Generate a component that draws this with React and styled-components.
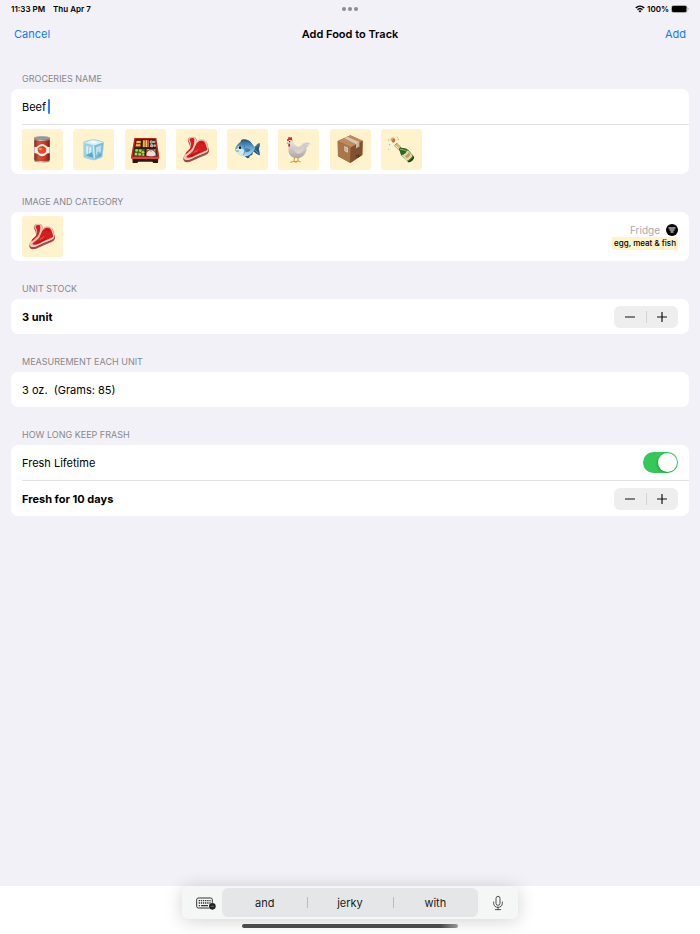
import { useState } from "react";
import styled, { createGlobalStyle } from "styled-components";

const GlobalStyle = createGlobalStyle`
  * {
    box-sizing: border-box;
  }

  body {
    margin: 0;
    background: #f2f1f7;
    color: #000;
    font-family: Inter, "Liberation Sans", sans-serif;
    font-size: 11px;
    line-height: 16px;
  }

  button,
  input {
    font: inherit;
    color: inherit;
  }
`;

const Page = styled.div`
  display: flex;
  flex-direction: column;
  min-height: 100vh;
`;

const StatusBar = styled.div`
  display: grid;
  grid-template-columns: 1fr auto 1fr;
  align-items: center;
  height: 17px;
  padding: 0 11px;
  font-size: 8px;
  font-weight: 600;
  line-height: 12px;
`;

const StatusGroup = styled.div`
  display: flex;
  align-items: center;
  gap: ${({ $gap }) => $gap}px;
  justify-content: ${({ $end }) => ($end ? "flex-end" : "flex-start")};
`;

const Dots = styled.div`
  display: flex;
  gap: 2px;

  i {
    width: 4px;
    height: 4px;
    border-radius: 50%;
    background: #8b8b8f;
  }
`;

const NavBar = styled.header`
  display: grid;
  grid-template-columns: 1fr auto 1fr;
  align-items: center;
  height: 34px;
  padding: 0 14px;
`;

const Title = styled.h1`
  margin: 0;
  font-size: 11px;
  font-weight: 600;
`;

const NavButton = styled.button`
  justify-self: ${({ $end }) => ($end ? "end" : "start")};
  padding: 0;
  border: none;
  background: none;
  color: #0a7aff;
  cursor: pointer;
`;

const Form = styled.main`
  display: flex;
  flex: 1;
  flex-direction: column;
  padding: 0 11px;
`;

const Section = styled.section`
  display: flex;
  flex-direction: column;
`;

const Caption = styled.h2`
  display: flex;
  align-items: flex-end;
  height: 38px;
  margin: 0;
  padding: 0 11px 4px;
  color: #88888d;
  font-size: 9px;
  font-weight: 400;
  line-height: 12px;
  text-transform: uppercase;
`;

const Card = styled.div`
  overflow: hidden;
  border-radius: 7px;
  background: #fff;
`;

const Row = styled.div`
  display: flex;
  align-items: center;
  justify-content: ${({ $start }) => ($start ? "flex-start" : "space-between")};
  height: ${({ $tall }) => ($tall ? 49 : 35)}px;
  padding: 0 11px;
  font-weight: ${({ $bold }) => ($bold ? 700 : 400)};
  white-space: pre;
`;

const Divider = styled.hr`
  height: 1px;
  margin: 0 0 0 11px;
  border: none;
  background: #e3e3e6;
`;

const NameInput = styled.input`
  field-sizing: content;
  padding: 0;
  border: none;
  outline: none;
  background: none;
  caret-color: transparent;
`;

const Caret = styled.span`
  width: 2px;
  height: 15px;
  margin-left: 2px;
  border-radius: 1px;
  background: #2f80f5;
`;

const Tiles = styled.div`
  display: flex;
  justify-content: space-between;
  width: 400px;
`;

const Tile = styled.button`
  display: block;
  width: 41px;
  height: 41px;
  padding: 0;
  border: none;
  border-radius: 3px;
  background: #fef3cd;
  cursor: pointer;

  svg {
    display: block;
    width: 100%;
    height: 100%;
  }
`;

const Category = styled.div`
  display: flex;
  flex-direction: column;
  align-items: flex-end;
  gap: 1px;
`;

const Place = styled.button`
  display: flex;
  align-items: center;
  gap: 6px;
  padding: 0;
  border: none;
  background: none;
  color: #a9a9ad;
  font-size: 10px;
  line-height: 12px;
  cursor: pointer;
`;

const Tag = styled.span`
  padding: 0 2px;
  background: #fef3cd;
  font-size: 8px;
  font-weight: 500;
  line-height: 13px;
`;

const StepperBox = styled.div`
  display: flex;
  align-items: center;
  height: 22px;
  border-radius: 6px;
  background: #eeeeef;
`;

const StepButton = styled.button`
  display: flex;
  align-items: center;
  justify-content: center;
  width: 32px;
  height: 22px;
  padding: 0;
  border: none;
  background: none;
  cursor: pointer;

  & + & {
    background: linear-gradient(#d3d3d5, #d3d3d5) left center / 1px 12px no-repeat;
  }
`;

const Switch = styled.input`
  display: flex;
  align-items: center;
  justify-content: ${({ checked }) => (checked ? "flex-end" : "flex-start")};
  appearance: none;
  width: 35px;
  height: 21px;
  margin: 0;
  padding: 1px;
  border-radius: 11px;
  background: ${({ checked }) => (checked ? "#34c759" : "#e9e9ea")};
  cursor: pointer;

  &::before {
    content: "";
    width: 19px;
    height: 19px;
    border-radius: 50%;
    background: #fff;
    box-shadow: -1px 1px 2px rgba(0, 0, 0, 0.2);
  }
`;

const Bottom = styled.footer`
  display: flex;
  flex-direction: column;
  align-items: center;
  gap: 5px;
  height: 48px;
  background: #fff;
`;

const Keyboard = styled.div`
  display: grid;
  grid-template-columns: 40px 1fr 40px;
  align-items: center;
  width: 48%;
  min-width: 336px;
  height: 33px;
  border-radius: 6px;
  background: #f5f6f6;
  box-shadow: 0 2px 18px rgba(0, 0, 0, 0.18);
`;

const Words = styled.div`
  display: grid;
  grid-template-columns: repeat(3, 1fr);
  height: 29px;
  border-radius: 6px;
  background: #e5e6e8;
`;

const Word = styled.button`
  padding: 0;
  border: none;
  background: none;
  color: #222;
  cursor: pointer;

  & + & {
    background: linear-gradient(#b9babc, #b9babc) left center / 1px 11px no-repeat;
  }
`;

const KeyButton = styled.button`
  display: flex;
  align-items: center;
  justify-content: ${({ $end }) => ($end ? "flex-end" : "center")};
  padding: ${({ $end }) => ($end ? "0 6px" : "0")};
  border: none;
  background: none;
  cursor: pointer;
`;

const HomeBar = styled.div`
  width: 216px;
  height: 4px;
  border-radius: 2px;
  background: linear-gradient(90deg, #4b4b4b 92%, #999);
`;

const CanIcon = () => (
  <svg viewBox="0 0 123 123" aria-hidden="true">
    <defs>
      <linearGradient id="canRed">
        <stop offset="0" stopColor="#8e2a1d" />
        <stop offset=".3" stopColor="#d8513a" />
        <stop offset=".7" stopColor="#c23a26" />
        <stop offset="1" stopColor="#7d2116" />
      </linearGradient>
      <linearGradient id="canTin">
        <stop offset="0" stopColor="#6f7778" />
        <stop offset=".4" stopColor="#e2e6e6" />
        <stop offset="1" stopColor="#6b7172" />
      </linearGradient>
    </defs>
    <path d="M37 26v70c4 7 42 7 46 0V26z" fill="url(#canTin)" />
    <path d="M37 32c6 4 40 4 46 0v60c-5 6-41 6-46 0z" fill="url(#canRed)" />
    <ellipse cx="60" cy="27" rx="23" ry="5" fill="#4d5557" />
    <ellipse cx="60" cy="26" rx="22" ry="4" fill="#8b9495" stroke="#d4dada" strokeWidth="1.5" />
    <path d="M37 53c5 2 8 1 11-2 6-7 19-7 25 0 3 3 6 4 10 2v20c-5-1-8 0-10 3-6 8-19 8-25 0-3-3-6-4-11-3z" fill="#f4efe7" />
    <ellipse cx="60" cy="63" rx="13" ry="11" fill="#e9482a" />
    <ellipse cx="55" cy="60" rx="5" ry="4" fill="#f8876b" />
    <path d="M60 56l-5-3 5 1 1-4 2 4 5-1-4 4z" fill="#4d752d" />
  </svg>
);

const IceIcon = () => (
  <svg viewBox="0 0 123 123" aria-hidden="true">
    <path d="M31 41c0-4 3-5 8-6l20-4c5-1 9 0 14 1l15 5c4 1 6 3 5 7l-4 37c0 4-2 5-6 7l-16 5c-4 1-7 1-11 0l-19-5c-4-1-6-3-6-7z" fill="#a5d5e9" />
    <path d="M33 41l27-8 31 7-27 9z" fill="#d5eff8" />
    <path d="M63 50l28-9-4 41-23 10z" fill="#7ebbd7" />
    <path d="M33 43l28 7 2 42-28-9z" fill="#9bd1e7" />
    <path d="M39 50l16 5-2 20-13 7z" fill="#d4f0f8" />
    <path d="M69 55l16-6-2 23-8-5-6 14z" fill="#b8e0ef" />
    <path d="M37 79l20-9 5 17zM69 86l14-14 1 8z" fill="#5ca6c9" />
    <path d="M45 38l17-3 14 5-14 4z" fill="#f2fbfd" />
    <path d="M62 50l2 38" stroke="#e6f7fc" strokeWidth="3" />
    <path d="M48 53l-3 27" stroke="#75b9d6" strokeWidth="2" />
  </svg>
);

const BentoIcon = () => (
  <svg viewBox="0 0 123 123" aria-hidden="true">
    <path d="M22 87h78l-1 15H85l-3-4H40l-3 4H23z" fill="#201c1b" />
    <path d="M28 27h66l9 58c0 4-1 5-5 5H23c-4 0-5-1-5-5z" fill="#b9271d" />
    <path d="M20 83h82v5c0 2-2 2-4 2H24c-3 0-4-1-4-3z" fill="#e14331" />
    <path d="M32 31h58l7 51H24z" fill="#2b1c17" />
    <path d="M34 34h15l-2 21H31zM53 34h18v21H51z" fill="#7c3c19" />
    <path d="M35 36h12v6H34zM33 46h13v6H32z" fill="#f2ba55" />
    <path d="M54 34h5v20h-5zM61 34h5v20h-5zM68 34h3v20h-3z" fill="#f68a2b" />
    <path d="M57 34v20M65 34v20" stroke="#fde2a4" strokeWidth="2" />
    <circle cx="79" cy="39" r="5" fill="#c5bcb0" />
    <circle cx="87" cy="39" r="4" fill="#b5ac9f" />
    <circle cx="80" cy="50" r="5" fill="#d0c7ba" />
    <circle cx="89" cy="50" r="4" fill="#b9b0a3" />
    <circle cx="79" cy="39" r="2" fill="#b64a2f" />
    <circle cx="80" cy="50" r="2" fill="#d67445" />
    <path d="M30 60h29v21H26z" fill="#426b1d" />
    <g fill="#a9d354">
      <circle cx="35" cy="64" r="4" />
      <circle cx="46" cy="65" r="4" />
      <circle cx="54" cy="70" r="4" />
      <circle cx="33" cy="75" r="4" />
      <circle cx="44" cy="76" r="4" />
      <circle cx="55" cy="78" r="3" />
    </g>
    <path d="M63 60h29l3 21H63z" fill="#784843" />
    <path d="M64 79c0-9 7-16 14-16s14 7 14 16c-6 4-22 4-28 0z" fill="#e8dcde" />
    <circle cx="78" cy="66" r="2" fill="#d84b5e" />
    <path d="M66 62h6M87 63h5" stroke="#f3ac3b" strokeWidth="3" />
  </svg>
);

const MeatIcon = () => (
  <svg viewBox="0 0 123 123" aria-hidden="true">
    <path d="M36 30c3-6 13-7 20-5 5 1 5 9 8 13 4-4 8-6 14-5 8 0 15 4 16 11 0 6 1 9 4 14 3 6 1 12-3 16-8 6-18 8-28 13-10 4-22 12-33 13-8 1-13-5-12-12 1-8 8-13 14-18 6-6 7-9 6-17-1-9-8-15-6-23z" fill="#9c4a47" />
    <path d="M37 28c3-5 12-6 18-4 5 2 5 9 8 12 4-4 9-6 15-5 8 0 14 5 15 12 0 5 1 8 4 13 2 6 0 9-4 12-9 5-19 9-29 13-11 5-22 12-31 12-7 0-11-4-10-10 1-7 8-11 13-16 6-6 8-11 7-19-1-8-8-13-6-20z" fill="#f1bdb0" />
    <path d="M41 30c3-3 9-4 12-2 4 5 2 12 0 19-2 8-5 13-11 18-4 4-9 8-13 11-2-4 4-8 8-12 8-7 9-13 8-20-1-6-5-10-4-14z" fill="#d31f1b" />
    <path d="M66 39c4-4 15-6 20 1 5 6 3 12 7 17 3 5-2 8-8 10-9 4-15 6-23 10-9 5-18 9-25 9-6 0-8-4-5-8 6-4 13-8 18-15 6-8 8-18 16-24z" fill="#d31f1b" />
    <path d="M58 33c2 10-4 23-9 32-4 6-12 10-19 16" fill="none" stroke="#f6cbbe" strokeWidth="4" strokeLinecap="round" />
    <path d="M71 42c6-3 11-1 12 4M40 82c11-1 20-8 32-14" fill="none" stroke="#b31214" strokeWidth="3" />
    <path d="M53 70c7-2 11-5 13-9" fill="none" stroke="#ef8c7d" strokeWidth="2" />
    <path d="M25 88c6 8 20 1 31-5 14-7 28-10 39-17" fill="none" stroke="#fad9cd" strokeWidth="3" />
  </svg>
);

const FishIcon = () => (
  <svg viewBox="0 0 123 123" aria-hidden="true">
    <defs>
      <linearGradient id="fishBody" x2="0" y2="1">
        <stop offset="0" stopColor="#2f6494" />
        <stop offset=".45" stopColor="#65a8d3" />
        <stop offset="1" stopColor="#b9e3f2" />
      </linearGradient>
    </defs>
    <path d="M40 40c2-7 5-10 9-9 12 0 22 5 28 17zM46 76l14 11c5 2 8-1 8-6l8-4 2-9z" fill="#285b88" />
    <path d="M76 57c9-1 12-12 21-15 4 6-1 12-1 18 0 7 4 12 2 19-9-2-14-10-23-13z" fill="#285b88" />
    <path d="M24 60c5-14 15-24 31-24 13 0 22 9 30 22-8 14-17 24-33 24-12 0-22-8-28-22z" fill="url(#fishBody)" />
    <path d="M25 62c5 11 13 17 24 18 4-5 5-11 2-16-7-7-17-8-26-2z" fill="#cfeaf3" />
    <path d="M48 39c7 12 8 26 1 39" fill="none" stroke="#377aaa" strokeWidth="2" />
    <path d="M54 59c8-3 13 0 17 4-5 6-11 8-16 5z" fill="#417fae" />
    <path d="M81 57l14-11M82 61l13 13" stroke="#6ea9ce" strokeWidth="2" />
    <circle cx="38" cy="56" r="6" fill="#f2f4e9" />
    <circle cx="39" cy="56" r="4" fill="#10171e" />
    <path d="M26 65c4 2 7 2 10 0" fill="none" stroke="#3a6686" strokeWidth="2" />
  </svg>
);

const ChickenIcon = () => (
  <svg viewBox="0 0 123 123" aria-hidden="true">
    <defs>
      <linearGradient id="henBody" x2="0" y2="1">
        <stop offset="0" stopColor="#eeebe8" />
        <stop offset="1" stopColor="#aca4a5" />
      </linearGradient>
    </defs>
    <path d="M50 80l-2 19m-11 1l11-3 8 4M62 80l-3 18m-8 0l10-2 7 3" fill="none" stroke="#d79820" strokeWidth="3" />
    <path d="M29 37c-4-5-2-8 1-7 0-6 4-7 6-4 4-4 7 0 6 4l3 9z" fill="#dd2f29" />
    <path d="M30 37c4-7 15-5 17 3 2 7 6 11 14 13 7-1 10-9 16-12 7-4 18-3 24 6-4-3-9-3-11 1 2 1 3 3 3 6-2-2-4-1-6 0-1 15-8 28-21 32-15 5-32-3-34-16-2-12 2-20-2-33z" fill="url(#henBody)" />
    <path d="M48 61c2 12 15 18 25 8 4-5 7-9 7-14-6-1-7 3-12 5-7 3-13-1-20 1z" fill="#d8d2d0" />
    <path d="M74 51c4-7 12-9 20-6M77 56c5-5 8-6 11-6" fill="none" stroke="#b7b0ae" strokeWidth="2" />
    <path d="M30 39l-5 4 6 2z" fill="#e1a02a" />
    <path d="M31 44c5-2 6 1 5 6-1 5-4 6-5 1z" fill="#ce2724" />
    <circle cx="35" cy="38" r="2" fill="#282221" />
  </svg>
);

const BoxIcon = () => (
  <svg viewBox="0 0 123 123" aria-hidden="true">
    <path d="M23 36l38-17 37 16-1 43-36 24-37-20z" fill="#a77246" />
    <path d="M23 36l38-17 37 16-35 20z" fill="#bd8b5e" />
    <path d="M23 36l40 19-2 47-37-20z" fill="#aa7549" />
    <path d="M63 55l35-20-1 43-36 24z" fill="#805030" />
    <path d="M43 27l9-4 36 17-10 6z" fill="#d9c8ae" />
    <path d="M78 46l10-6v14l-4-1-2 4-4 1z" fill="#cab79e" />
    <path d="M43 51l11 5v15l-11-5z" fill="#ddd0c2" />
    <path d="M45 57l7 4M45 62l7 4" stroke="#9b8e82" strokeWidth="2" />
    <path d="M76 81l5-3v9m5-12v9l5-4" fill="none" stroke="#462a19" strokeWidth="2" />
    <path d="M62 56l-1 45" stroke="#714426" strokeWidth="1" />
  </svg>
);

const BottleIcon = () => (
  <svg viewBox="0 0 123 123" aria-hidden="true">
    <path d="M40 49l8-7 13 14c8 1 16 1 21 7l17 20c2 7-9 18-17 17L62 80c-5-6-4-12-8-18z" fill="#2b6524" />
    <path d="M57 61c9 0 17 2 22 8l15 16" fill="none" stroke="#7cad48" strokeWidth="4" />
    <path d="M39 50l10-8 11 11-9 9z" fill="#d7ba72" />
    <path d="M43 49l11 11" stroke="#f2dfab" strokeWidth="3" />
    <path d="M62 79c6-1 16-9 18-16l14 16c-2 8-10 15-17 17z" fill="#ead7a0" />
    <path d="M71 81c5-1 10-6 12-11l5 6c-2 6-6 10-11 12z" fill="#b6a269" />
    <path d="M80 99c8-3 16-10 18-17 4 7-10 20-18 17z" fill="#173c17" />
    <path d="M29 32c2-6 7-7 11-4l5 7-9 7z" fill="#b97a45" />
    <path d="M29 31c0-5 6-8 10-4l-7 8z" fill="#e2aa72" />
    <path d="M31 45l8 6M45 33l-2 9M26 51l8 1" stroke="#f9f4e7" strokeWidth="3" />
    <g fill="#a9a69b">
      <circle cx="23" cy="33" r="2" />
      <circle cx="26" cy="47" r="2" />
      <circle cx="52" cy="31" r="2" />
      <circle cx="23" cy="61" r="1.5" />
      <circle cx="49" cy="25" r="1.5" />
    </g>
  </svg>
);

const WifiIcon = () => (
  <svg width="10" height="8" viewBox="0 0 20 16" aria-hidden="true">
    <g fill="none" stroke="#000" strokeWidth="2.8">
      <path d="M1.5 6c5-5 12-5 17 0" />
      <path d="M5 9.5c3-3 7-3 10 0" />
    </g>
    <path d="M7 12c2-2 4-2 6 0l-3 3z" />
  </svg>
);

const BatteryIcon = () => (
  <svg width="18" height="8" viewBox="0 0 18 8" aria-hidden="true">
    <rect x=".5" y=".5" width="15.5" height="7" rx="2" fill="none" stroke="#aaa9ad" />
    <rect x="1" y="1" width="14.5" height="6" rx="1.3" />
    <path d="M17 3v2c1.2-.4 1.2-1.6 0-2z" fill="#aaa9ad" />
  </svg>
);

const FilterIcon = () => (
  <svg width="12" height="12" viewBox="0 0 24 24" aria-hidden="true">
    <circle cx="12" cy="12" r="12" fill="#000" />
    <path d="M5 8h14M7 12h10M9 16h6" stroke="#b5b5b7" strokeWidth="2.6" />
  </svg>
);

const StepIcon = ({ plus }) => (
  <svg width="10" height="10" viewBox="0 0 10 10" aria-hidden="true">
    <path d={plus ? "M.5 5h9M5 .5v9" : "M.5 5h9"} stroke="#111" strokeWidth="1.2" strokeLinecap="round" />
  </svg>
);

const KeyboardIcon = () => (
  <svg width="20" height="14" viewBox="0 0 60 42" aria-hidden="true">
    <rect x="2" y="6" width="47" height="30" rx="5" fill="none" stroke="#333" strokeWidth="3" />
    <path d="M8 14h36M8 21h36" stroke="#333" strokeWidth="4" strokeDasharray="4 2.4" />
    <path d="M8 29h4M15 29h21" stroke="#333" strokeWidth="4" />
    <circle cx="49" cy="31" r="11" fill="#f5f6f6" />
    <circle cx="49" cy="31" r="10" fill="#222" />
    <path d="M44 31h10" stroke="#8f8f8f" strokeWidth="2" />
  </svg>
);

const MicIcon = () => (
  <svg width="12" height="16" viewBox="0 0 36 48" aria-hidden="true">
    <g fill="none" stroke="#444" strokeWidth="2.8" strokeLinecap="round">
      <rect x="12" y="4" width="12" height="27" rx="6" />
      <path d="M5 21v4c0 16 26 16 26 0v-4M18 37v7M10 44h16" />
    </g>
  </svg>
);

const foods = [
  { name: "Canned food", Icon: CanIcon },
  { name: "Frozen", Icon: IceIcon },
  { name: "Bento", Icon: BentoIcon },
  { name: "Meat", Icon: MeatIcon },
  { name: "Fish", Icon: FishIcon },
  { name: "Chicken", Icon: ChickenIcon },
  { name: "Package", Icon: BoxIcon },
  { name: "Drinks", Icon: BottleIcon },
];

const Stepper = ({ label, value, onChange }) => (
  <StepperBox role="group" aria-label={label}>
    <StepButton type="button" aria-label="Decrease" onClick={() => onChange(Math.max(0, value - 1))}>
      <StepIcon />
    </StepButton>
    <StepButton type="button" aria-label="Increase" onClick={() => onChange(value + 1)}>
      <StepIcon plus />
    </StepButton>
  </StepperBox>
);

const App = () => {
  const [name, setName] = useState("Beef");
  const [food, setFood] = useState(3);
  const [units, setUnits] = useState(3);
  const [days, setDays] = useState(10);
  const [fresh, setFresh] = useState(true);
  const Selected = foods[food].Icon;

  return (
    <Page>
      <GlobalStyle />
      <StatusBar>
        <StatusGroup $gap={8}>
          <span>11:33 PM</span>
          <span>Thu Apr 7</span>
        </StatusGroup>
        <Dots>
          <i />
          <i />
          <i />
        </Dots>
        <StatusGroup $gap={2} $end>
          <WifiIcon />
          <span>100%</span>
          <BatteryIcon />
        </StatusGroup>
      </StatusBar>
      <NavBar>
        <NavButton type="button">Cancel</NavButton>
        <Title>Add Food to Track</Title>
        <NavButton type="button" $end>
          Add
        </NavButton>
      </NavBar>
      <Form>
        <Section>
          <Caption as="label" htmlFor="name">Groceries name</Caption>
          <Card>
            <Row $start>
              <NameInput id="name" value={name} onChange={(e) => setName(e.target.value)} />
              <Caret />
            </Row>
            <Divider />
            <Row $tall>
              <Tiles>
                {foods.map(({ name, Icon }, i) => (
                  <Tile key={name} type="button" aria-label={name} onClick={() => setFood(i)}>
                    <Icon />
                  </Tile>
                ))}
              </Tiles>
            </Row>
          </Card>
        </Section>
        <Section>
          <Caption>Image and category</Caption>
          <Card>
            <Row $tall>
              <Tile type="button" aria-label={foods[food].name}>
                <Selected />
              </Tile>
              <Category>
                <Place type="button">
                  Fridge
                  <FilterIcon />
                </Place>
                <Tag>egg, meat &amp; fish</Tag>
              </Category>
            </Row>
          </Card>
        </Section>
        <Section>
          <Caption>Unit stock</Caption>
          <Card>
            <Row $bold>
              <span>{units} unit</span>
              <Stepper label="Unit stock" value={units} onChange={setUnits} />
            </Row>
          </Card>
        </Section>
        <Section>
          <Caption>Measurement each unit</Caption>
          <Card>
            <Row>{"3 oz.  (Grams: 85)"}</Row>
          </Card>
        </Section>
        <Section>
          <Caption>How long keep frash</Caption>
          <Card>
            <Row>
              <label htmlFor="fresh">Fresh Lifetime</label>
              <Switch
                id="fresh"
                type="checkbox"
                role="switch"
                checked={fresh}
                onChange={(e) => setFresh(e.target.checked)}
              />
            </Row>
            <Divider />
            <Row $bold>
              <span>Fresh for {days} days</span>
              <Stepper label="Fresh days" value={days} onChange={setDays} />
            </Row>
          </Card>
        </Section>
      </Form>
      <Bottom>
        <Keyboard>
          <KeyButton type="button" aria-label="Keyboard" $end>
            <KeyboardIcon />
          </KeyButton>
          <Words>
            <Word type="button">and</Word>
            <Word type="button">jerky</Word>
            <Word type="button">with</Word>
          </Words>
          <KeyButton type="button" aria-label="Dictate">
            <MicIcon />
          </KeyButton>
        </Keyboard>
        <HomeBar />
      </Bottom>
    </Page>
  );
};

export default App;
